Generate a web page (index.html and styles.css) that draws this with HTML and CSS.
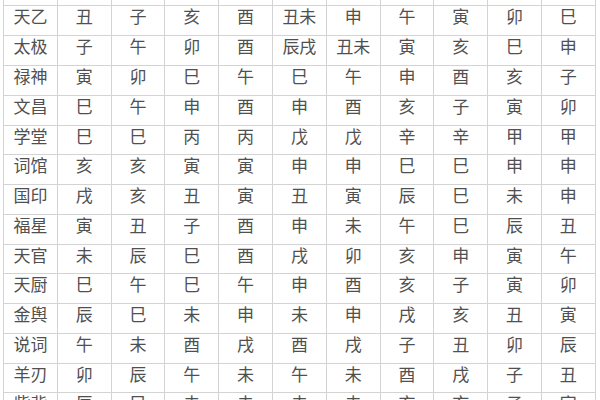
FILE: index.html
```html
<!DOCTYPE html>
<html lang="zh">
<head>
<meta charset="utf-8">
<link rel="stylesheet" href="styles.css">
</head>
<body>
<div class="sheet">
  <div class="c"></div><div class="c"></div><div class="c"></div><div class="c"></div><div class="c"></div><div class="c"></div><div class="c"></div><div class="c"></div><div class="c"></div><div class="c"></div><div class="c"></div>
  <div class="c">天乙</div><div class="c">丑</div><div class="c">子</div><div class="c">亥</div><div class="c">酉</div><div class="c">丑未</div><div class="c">申</div><div class="c">午</div><div class="c">寅</div><div class="c">卯</div><div class="c">巳</div>
  <div class="c">太极</div><div class="c">子</div><div class="c">午</div><div class="c">卯</div><div class="c">酉</div><div class="c">辰戌</div><div class="c">丑未</div><div class="c">寅</div><div class="c">亥</div><div class="c">巳</div><div class="c">申</div>
  <div class="c">禄神</div><div class="c">寅</div><div class="c">卯</div><div class="c">巳</div><div class="c">午</div><div class="c">巳</div><div class="c">午</div><div class="c">申</div><div class="c">酉</div><div class="c">亥</div><div class="c">子</div>
  <div class="c">文昌</div><div class="c">巳</div><div class="c">午</div><div class="c">申</div><div class="c">酉</div><div class="c">申</div><div class="c">酉</div><div class="c">亥</div><div class="c">子</div><div class="c">寅</div><div class="c">卯</div>
  <div class="c">学堂</div><div class="c">巳</div><div class="c">巳</div><div class="c">丙</div><div class="c">丙</div><div class="c">戊</div><div class="c">戊</div><div class="c">辛</div><div class="c">辛</div><div class="c">甲</div><div class="c">甲</div>
  <div class="c">词馆</div><div class="c">亥</div><div class="c">亥</div><div class="c">寅</div><div class="c">寅</div><div class="c">申</div><div class="c">申</div><div class="c">巳</div><div class="c">巳</div><div class="c">申</div><div class="c">申</div>
  <div class="c">国印</div><div class="c">戌</div><div class="c">亥</div><div class="c">丑</div><div class="c">寅</div><div class="c">丑</div><div class="c">寅</div><div class="c">辰</div><div class="c">巳</div><div class="c">未</div><div class="c">申</div>
  <div class="c">福星</div><div class="c">寅</div><div class="c">丑</div><div class="c">子</div><div class="c">酉</div><div class="c">申</div><div class="c">未</div><div class="c">午</div><div class="c">巳</div><div class="c">辰</div><div class="c">丑</div>
  <div class="c">天官</div><div class="c">未</div><div class="c">辰</div><div class="c">巳</div><div class="c">酉</div><div class="c">戌</div><div class="c">卯</div><div class="c">亥</div><div class="c">申</div><div class="c">寅</div><div class="c">午</div>
  <div class="c">天厨</div><div class="c">巳</div><div class="c">午</div><div class="c">巳</div><div class="c">午</div><div class="c">申</div><div class="c">酉</div><div class="c">亥</div><div class="c">子</div><div class="c">寅</div><div class="c">卯</div>
  <div class="c">金舆</div><div class="c">辰</div><div class="c">巳</div><div class="c">未</div><div class="c">申</div><div class="c">未</div><div class="c">申</div><div class="c">戌</div><div class="c">亥</div><div class="c">丑</div><div class="c">寅</div>
  <div class="c">说词</div><div class="c">午</div><div class="c">未</div><div class="c">酉</div><div class="c">戌</div><div class="c">酉</div><div class="c">戌</div><div class="c">子</div><div class="c">丑</div><div class="c">卯</div><div class="c">辰</div>
  <div class="c">羊刃</div><div class="c">卯</div><div class="c">辰</div><div class="c">午</div><div class="c">未</div><div class="c">午</div><div class="c">未</div><div class="c">酉</div><div class="c">戌</div><div class="c">子</div><div class="c">丑</div>
  <div class="c">紫背</div><div class="c">辰</div><div class="c">巳</div><div class="c">未</div><div class="c">未</div><div class="c">未</div><div class="c">未</div><div class="c">亥</div><div class="c">亥</div><div class="c">子</div><div class="c">寅</div>
</div>
</body>
</html>
```
FILE: styles.css
```css
html, body {
  margin: 0;
  padding: 0;
  background: #ffffff;
  overflow: hidden;
}
body {
  width: 600px;
  height: 400px;
}
.sheet {
  display: grid;
  grid-template-columns: repeat(11, 52.8px);
  grid-auto-rows: 28.77px;
  gap: 1px;
  background: #d3d3d3;
  border: 1px solid #d3d3d3;
  width: max-content;
  margin: -24.3px 0 0 3px;
}
.c {
  background: #ffffff;
  color: #505050;
  font-family: "Noto Sans CJK SC", "Noto Sans", sans-serif;
  font-size: 17px;
  line-height: 18px;
  text-align: center;
  padding-top: 1px;
}
```
